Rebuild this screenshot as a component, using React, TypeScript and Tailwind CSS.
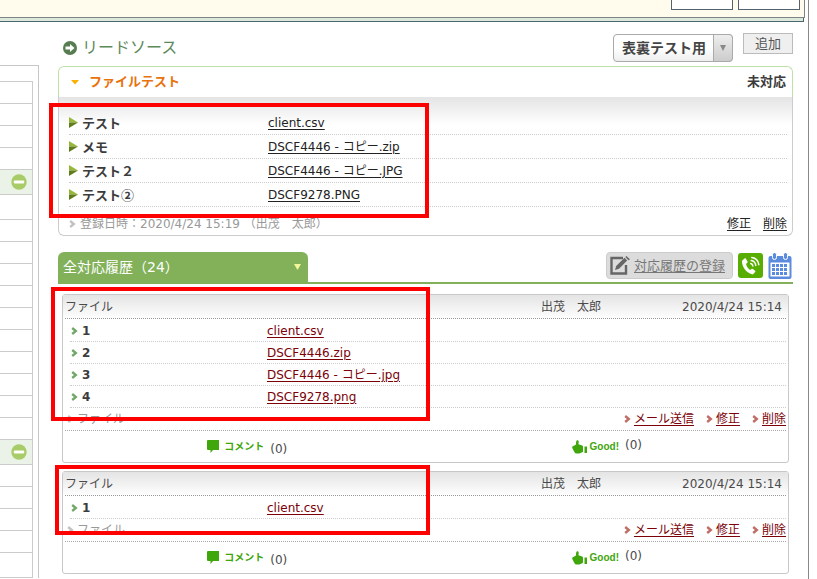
import { useState } from "react";
import type { ReactNode } from "react";

type FileItem = { label: string; file: string };

const leadFiles: FileItem[] = [
  { label: "テスト", file: "client.csv" },
  { label: "メモ", file: "DSCF4446 - コピー.zip" },
  { label: "テスト２", file: "DSCF4446 - コピー.JPG" },
  { label: "テスト②", file: "DSCF9278.PNG" },
];

const firstHistory: FileItem[] = [
  { label: "1", file: "client.csv" },
  { label: "2", file: "DSCF4446.zip" },
  { label: "3", file: "DSCF4446 - コピー.jpg" },
  { label: "4", file: "DSCF9278.png" },
];

const secondHistory: FileItem[] = [{ label: "1", file: "client.csv" }];

// Row kinds of the left menu, from top to bottom
const menuRows = [
  "row", "row", "row", "row", "group", "tall",
  "row", "row", "row", "row", "row", "row", "row", "row", "row", "row",
  "group", "row", "row", "row", "row", "tall",
];

const menuRowClass: Record<string, string> = {
  row: "h-[22px]",
  tall: "h-[25px]",
  group: "h-[25px] bg-[#ebf3e8]",
};

function Chevron({ className }: { className: string }) {
  return (
    <svg width="7" height="8" viewBox="0 0 7 8" className={`shrink-0 ${className}`} aria-hidden="true">
      <path d="M1.200 1l3.600 3-3.600 3" fill="none" stroke="currentColor" strokeWidth="2.400" />
    </svg>
  );
}

function Sidebar() {
  return (
    <aside className="mt-[43px] w-[39px] shrink-0 border-t border-r border-[#c6c6c6]">
      <ul className="mt-[15px] mr-[5px] border-t border-r border-[#ccc]">
        {menuRows.map((kind, i) => (
          <li key={i} className={`flex items-center justify-end border-b border-[#ccc] pr-[5px] ${menuRowClass[kind]}`}>
            {kind === "group" && (
              <button type="button" aria-label="閉じる">
                <svg width="16" height="16" viewBox="0 0 16 16" className="block">
                  <circle cx="8" cy="8" r="7.700" fill="#a8cd68" />
                  <rect x="2.800" y="6.500" width="10.400" height="3" rx="1" fill="#fff" />
                </svg>
              </button>
            )}
          </li>
        ))}
      </ul>
    </aside>
  );
}

function LeadCard() {
  return (
    <section className="relative">
      <div className="flex h-[31px] items-center justify-between rounded-t-md border-x border-t border-[#bfe0a6] pr-1.5 pl-3 text-[13px] font-bold">
        <div className="flex items-center gap-2.5">
          <svg width="8" height="5" viewBox="0 0 8 5" aria-hidden="true">
            <path d="M0 0h8L4 4.500z" fill="#f9b000" />
          </svg>
          <h2 className="text-[#e8720c]">ファイルテスト</h2>
        </div>
        <span className="text-[#3c3c3c]">未対応</span>
      </div>
      <div className="rounded-b-md border-x border-b border-[#ccc] bg-linear-to-b from-[#e4e4e4] to-white to-20% pt-3.5 pr-[5px] pl-2.5">
        <dl>
          {leadFiles.map((item) => (
            <div key={item.label} className="flex h-6 items-center border-b border-dotted border-[#ccc]">
              <dt className="flex w-[199px] shrink-0 items-center gap-1 font-['Noto_Sans_CJK_JP',sans-serif] text-[13px] font-bold text-[#3c3c3c]">
                <svg width="9" height="11" viewBox="0 0 9 11" aria-hidden="true">
                  <path d="M0 0l9 5.500H0z" fill="#97b83b" />
                  <path d="M0 11l9-5.500H0z" fill="#5f7d1c" />
                </svg>
                {item.label}
              </dt>
              <dd>
                <a href="#" className="text-[#222] underline underline-offset-2">{item.file}</a>
              </dd>
            </div>
          ))}
        </dl>
        <div className="flex h-7 items-center justify-between pt-1.5">
          <p className="flex items-center gap-1 text-[#999]">
            <Chevron className="text-[#c2c2c2]" />
            登録日時：2020/4/24 15:19 （出茂　太郎）
          </p>
          <div className="flex gap-3 text-[#222]">
            <a href="#" className="underline underline-offset-2">修正</a>
            <a href="#" className="underline underline-offset-2">削除</a>
          </div>
        </div>
      </div>
      <div className="pointer-events-none absolute top-[37px] -left-[9px] h-[115px] w-[380px] border-4 border-[#ff0000]" />
    </section>
  );
}

function ActionLink({ children }: { children: ReactNode }) {
  return (
    <span className="flex items-center gap-[3px]">
      <Chevron className="text-[#bf6d66]" />
      <a href="#" className="text-[#7b0008] underline underline-offset-2">{children}</a>
    </span>
  );
}

function HistoryCard({ files, marker }: { files: FileItem[]; marker: string }) {
  return (
    <article className="relative mx-1 mb-2 rounded-[3px] border border-[#c8c8c8]">
      <div className="bg-linear-to-b from-[#e4e4e4] to-white px-0.5">
        <header className="flex h-6 items-center border-b border-dotted border-[#999] pr-1 text-[#4a4a4a]">
          <h3 className="flex-1">ファイル</h3>
          <span className="w-[141px]">出茂　太郎</span>
          <time>2020/4/24 15:14</time>
        </header>
      </div>
      <dl className="pt-px pr-0.5 pl-[7px]">
        {files.map((item) => (
          <div key={item.label} className="flex h-[22px] items-center border-b border-dotted border-[#ccc]">
            <dt className="flex w-[197px] shrink-0 items-center gap-1 pl-px font-bold text-[#3c3c3c]">
              <Chevron className="text-[#72a868]" />
              {item.label}
            </dt>
            <dd>
              <a href="#" className="text-[#7b0008] underline underline-offset-2">{item.file}</a>
            </dd>
          </div>
        ))}
      </dl>
      <div className="mx-0.5 flex h-[23px] items-center justify-between border-b border-dotted border-[#aaa]">
        <p className="flex items-center gap-[3px] pl-0.5 text-[#999]">
          <Chevron className="text-[#c2c2c2]" />
          ファイル
        </p>
        <div className="flex gap-3">
          <ActionLink>メール送信</ActionLink>
          <ActionLink>修正</ActionLink>
          <ActionLink>削除</ActionLink>
        </div>
      </div>
      <div className="grid h-[31px] grid-cols-2 text-[#4a4a4a]">
        <div className="flex items-center justify-center pl-1.5">
          <button type="button" className="flex items-center gap-1 text-[10px] font-bold text-[#3fa60c]">
            <svg width="13" height="13" viewBox="0 0 13 13" aria-hidden="true">
              <path d="M1 0h11v10H6l-2.500 3V10H1a1 1 0 0 1-1-1V1a1 1 0 0 1 1-1z" fill="#3fa60c" />
            </svg>
            コメント
          </button>
          <span className="pt-1 pl-1.5">(0)</span>
        </div>
        <div className="flex items-center justify-center">
          <button type="button" className="flex items-center gap-[3px] font-['Liberation_Sans',sans-serif] text-[10px] font-bold text-[#3fa60c]">
            <svg width="15" height="14" viewBox="0 0 15 14" aria-hidden="true">
              <path
                d="M4.500.8C5.600-.2 6.800.5 6.700 2L6.500 4.200l3.700 1.300c.5.200.8.500.8 1v4.700c0 .5-.3.900-.8 1.100l-2.200 1c-.4.200-.8.200-1.200.2H4.500c-.9 0-1.600-.4-2-1.200L.4 8.200C-.1 7.100.2 6.300 1.300 6l2.400-1.200c.4-.8.500-1.600.3-2.600z"
                fill="#3fa60c"
              />
              <path d="M12.500 6.500H15V13h-2.500z" fill="#3fa60c" />
            </svg>
            Good!
          </button>
          <span className="pb-1 pl-1.5">(0)</span>
        </div>
      </div>
      <div className={`pointer-events-none absolute border-4 border-[#ff0000] ${marker}`} />
    </article>
  );
}

function PhoneIcon() {
  return (
    <svg width="25" height="25" viewBox="0 0 25 25" className="block">
      <rect width="25" height="25" rx="3" fill="#58ae00" />
      <path
        d="M4.300 7.500L6.500 5.500c.5-.4 1.100-.3 1.400.2l1.600 2.800c.3.500.2 1-.2 1.300L8 10.900c.7 2.600 2 4.600 4.100 6l1.500-1c.4-.3.900-.3 1.300 0l2.200 1.900c.5.400.5.900.1 1.300l-1.900 1.900c-.4.400-.9.500-1.400.3C8.500 19.600 4.600 15 3.900 8.700c0-.5 0-.9.400-1.200z"
        fill="#fff"
      />
      <path
        d="M12.700 10.500c1.200.3 2 1.200 2.200 2.500M13.200 7.500c2.500.4 4.200 2.200 4.600 4.900M13.800 4.600c3.800.5 6.500 3.200 7 7.100"
        fill="none"
        stroke="#fff"
        strokeWidth="1.500"
        strokeLinecap="round"
      />
    </svg>
  );
}

function CalendarIcon() {
  return (
    <svg width="24" height="26" viewBox="0 0 24 26" className="block">
      <rect x="0.500" y="3" width="23" height="23" rx="2" fill="#5b8bdd" />
      <rect x="2.500" y="9.500" width="19" height="14" fill="#fff" />
      <g fill="#5b8bdd" stroke="#fff" strokeWidth="1">
        <rect x="4.500" y="-0.500" width="4" height="7" rx="2" />
        <rect x="15.500" y="-0.500" width="4" height="7" rx="2" />
      </g>
      <path
        d="M8 11h3v3H8zM12 11h3v3h-3zM16 11h3v3h-3zM4 15h3v3H4zM8 15h3v3H8zM12 15h3v3h-3zM16 15h3v3h-3zM4 19h3v3H4zM8 19h3v3H8zM12 19h3v3h-3zM16 19h3v3h-3zM4 11h3v3H4z"
        fill="#5b8bdd"
      />
    </svg>
  );
}

export default function App() {
  const [template, setTemplate] = useState("表裏テスト用");

  return (
    <div className="min-h-screen bg-white font-['DejaVu_Sans','Noto_Sans_CJK_JP',sans-serif] text-[12px] leading-4">
      <div className="mr-2 min-h-screen border-r border-[#888]">
        <header>
          <div className="mr-[3px] flex h-[18px] items-start justify-end gap-[5px] border-r border-b border-[#7d8486] bg-[#fffcee] pr-1">
            <div className="h-2.5 w-[62px] border-x border-b border-[#536470] bg-white" />
            <div className="h-2.5 w-[62px] border-x border-b border-[#536470] bg-white" />
          </div>
          <div className="mr-1 h-1 border-r border-b border-[#4c6670] bg-[#dce8da]" />
        </header>

        <div className="flex items-start">
          <Sidebar />

          <main className="mr-[15px] ml-[19px] min-w-0 flex-1">
            <div className="flex h-11 items-start pt-[11px]">
              <h1 className="flex h-[30px] flex-1 items-center gap-[5px] pl-[5px] text-[16px] text-[#5c8a5a]">
                <svg width="14" height="14" viewBox="0 0 14 14" aria-hidden="true">
                  <circle cx="7" cy="7" r="7" fill="#567d50" />
                  <path d="M2.500 5.500H7V3l4.500 4L7 11V8.500H2.500z" fill="#fff" />
                </svg>
                リードソース
              </h1>
              <div className="relative mt-px mr-2.5">
                <select
                  aria-label="テンプレート"
                  value={template}
                  onChange={(e) => setTemplate(e.target.value)}
                  className="block h-7 w-[120px] appearance-none rounded-[4px] border border-[#aaa] bg-linear-to-b from-white from-50% to-[#eee] pl-2 text-[14px] font-bold text-[#444]"
                >
                  <option>表裏テスト用</option>
                </select>
                <span className="pointer-events-none absolute inset-y-0 right-0 flex w-5 items-center justify-center rounded-r-[4px] border border-[#aaa] bg-linear-to-b from-[#eee] to-[#ccc]">
                  <svg width="6" height="6" viewBox="0 0 6 6" aria-hidden="true">
                    <path d="M0 0h6L3 6z" fill="#888" />
                  </svg>
                </span>
              </div>
              <button type="button" className="h-[21px] w-[50px] border border-[#bbb] bg-[#efefef] text-[13px] text-[#555]">
                追加
              </button>
            </div>

            <LeadCard />

            <div className="mt-4 mb-2.5 flex h-8 items-start justify-between border-b-2 border-[#82b15a]">
              <button
                type="button"
                className="flex h-8 w-[250px] items-center justify-between rounded-t-md bg-[#82b15a] pr-[7px] pb-0.5 pl-[5px] text-[14px] text-white"
              >
                <span>全対応履歴（24）</span>
                <svg width="7" height="6" viewBox="0 0 7 6" aria-hidden="true">
                  <path d="M0 0h7L3.500 6z" fill="#f3f79a" />
                </svg>
              </button>
              <div className="flex items-center gap-[5px]">
                <a
                  href="#"
                  className="flex h-[27px] w-[127px] items-center gap-1 rounded-[4px] border border-[#ccc] bg-[#dcdcdc] pl-[3px] text-[13px] text-[#777]"
                >
                  <svg width="20" height="19" viewBox="0 0 20 19" aria-hidden="true">
                    <path d="M13 2H1.500v15.500H16V9" fill="none" stroke="#666" strokeWidth="2.400" />
                    <path d="M5 14l1.200-4L14.500 1.800l2.700 2.700L9 12.700z" fill="#666" />
                    <path d="M15.300 1l1-1L20 3.200l-1.500 1z" fill="#666" />
                  </svg>
                  <span className="underline underline-offset-2">対応履歴の登録</span>
                </a>
                <button type="button" aria-label="電話">
                  <PhoneIcon />
                </button>
                <button type="button" aria-label="カレンダー" className="mr-px">
                  <CalendarIcon />
                </button>
              </div>
            </div>

            <HistoryCard files={firstHistory} marker="-top-2 -left-3 h-[134px] w-[379px]" />
            <HistoryCard files={secondHistory} marker="-top-[7px] -left-2 h-[70px] w-[375px]" />
          </main>
        </div>
      </div>
    </div>
  );
}
